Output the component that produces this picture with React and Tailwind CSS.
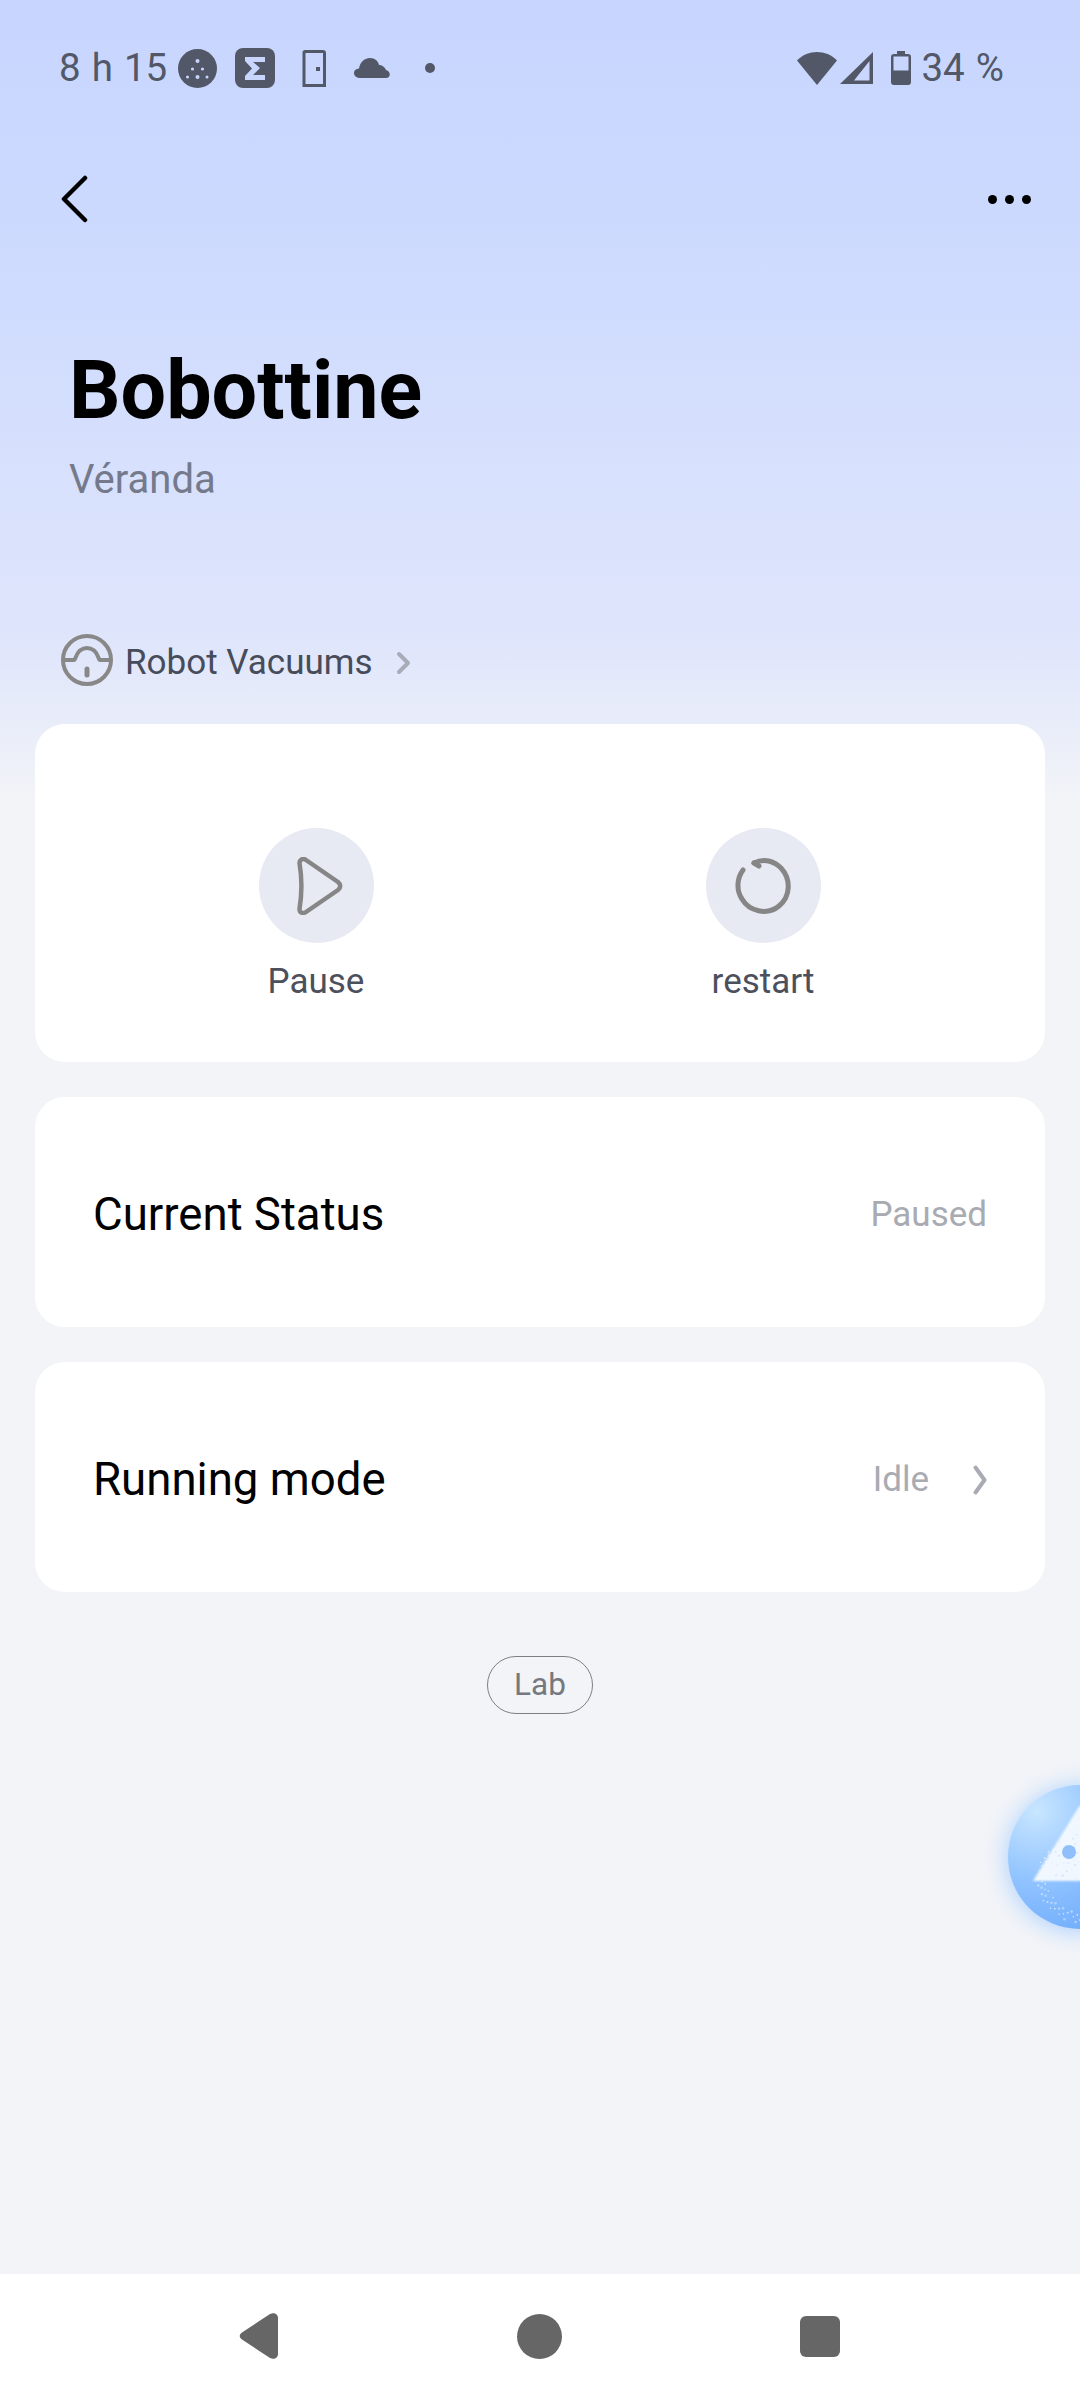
const specks = Array.from({ length: 130 }, (_, i) => {
  const a = (i * 137.508 * Math.PI) / 180;
  const r = 10 + ((i * 37) % 60);
  return { x: 70 + r * Math.cos(a), y: 84 + r * Math.sin(a), s: 0.5 + ((i * 13) % 10) / 10, o: 0.25 + ((i * 7) % 10) / 16 };
});
const holes = Array.from({ length: 60 }, (_, i) => {
  const a = (i * 97.3 * Math.PI) / 180;
  const r = 4 + ((i * 29) % 30);
  return { x: 72 + r * Math.cos(a), y: 72 + r * Math.sin(a) * 0.8, s: 0.4 + ((i * 11) % 8) / 10 };
});

function Ball() {
  return (
    <div className="absolute left-[1008px] top-[1785px] w-[72px] h-[144px] overflow-visible">
      <svg width="144" height="144" viewBox="0 0 144 144" className="block overflow-visible">
        <defs>
          <radialGradient id="ballFill" cx="20%" cy="18%" r="100%">
            <stop offset="0%" stopColor="#c8e6ff" />
            <stop offset="50%" stopColor="#8fc2ff" />
            <stop offset="100%" stopColor="#6aa9fb" />
          </radialGradient>
          <filter id="ballGlow" x="-40%" y="-40%" width="180%" height="180%">
            <feGaussianBlur stdDeviation="11" />
          </filter>
          <filter id="triSoft"><feGaussianBlur stdDeviation="0.9" /></filter>
        </defs>
        <circle cx="72" cy="74" r="74" fill="#9cc8ff" opacity="0.75" filter="url(#ballGlow)" />
        <circle cx="72" cy="72" r="72" fill="url(#ballFill)" />
        {specks.map((p, i) => (
          <circle key={i} cx={p.x} cy={p.y} r={p.s} fill="#fff" opacity={p.o} />
        ))}
        <path d="M72 20 L25 96 L119 96 Z" fill="#f6faff" opacity="0.95" filter="url(#triSoft)" />
        {holes.map((p, i) => (
          <circle key={i} cx={p.x} cy={p.y} r={p.s} fill="#b5d6fb" opacity="0.5" />
        ))}
        <circle cx="61" cy="67" r="7" fill="#8fc0fb" />
      </svg>
    </div>
  );
}

function StatusBar() {
  return (
    <div className="relative h-[92px] pt-[44px] pl-[59px] pr-[76px] flex items-center justify-between text-[#525868]">
      <div className="flex items-center">
        <span className="text-[38.5px] leading-[48px] [word-spacing:1.5px] w-[119px] whitespace-nowrap">8 h 15</span>
        <svg width="39" height="39" viewBox="0 0 39 39" className="block">
          <circle cx="19.5" cy="19.5" r="19.5" fill="#525868" />
          <g fill="#c8d6ff">
            <circle cx="19.5" cy="12" r="2" /><circle cx="14.5" cy="20" r="1.6" /><circle cx="24.5" cy="20" r="1.6" />
            <circle cx="9.5" cy="28" r="1.5" /><circle cx="19.5" cy="28" r="2" /><circle cx="29" cy="28" r="1.5" />
          </g>
        </svg>
        <svg width="40" height="40" viewBox="0 0 40 40" className="block ml-[18px]">
          <rect width="40" height="40" rx="8" fill="#525868" />
          <path d="M10 9 H30 V14 H18 L25 20 L18 27 H30 V32 H10 V28 L17 20.5 L10 13 Z" fill="#c8d6ff" />
        </svg>
        <svg width="24" height="37" viewBox="0 0 24 37" className="block ml-[27px]">
          <path d="M2 35.5 V2.5 Q2 1.5 3 1.5 H21 Q22.500 1.500 22.500 3 V35.5 Z" fill="none" stroke="#525868" strokeWidth="3" />
          <rect x="14" y="17" width="4" height="4" fill="#525868" />
        </svg>
        <svg width="36" height="20" viewBox="0 0 36 20" className="block ml-[28px]">
          <path d="M7 20 C-2 20 -2 11 5 10.500 C6 4 11 0 16 0 C21 0 24 3 25 7 C28 7 31 9 32 12 C37 13 37 20 32 20 Z" fill="#525868" />
        </svg>
        <div className="w-[10px] h-[10px] rounded-full bg-[#525868] ml-[35px]" />
      </div>
      <div className="flex items-center">
        <svg width="40" height="33" viewBox="0 0 40 33" className="block">
          <path d="M0 8.500 C11 -2.800 29 -2.800 40 8.500 L20 33 Z" fill="#525868" />
        </svg>
        <svg width="33" height="32" viewBox="0 0 33 32" className="block ml-[3px]">
          <path d="M0 32 L33 0 V32 Z M14 28.500 H29.500 V9 Z" fillRule="evenodd" fill="#525868" />
        </svg>
        <svg width="20" height="34" viewBox="0 0 20 34" className="block ml-[18px]">
          <path d="M6 0 H14 V3 H17 Q20 3 20 6 V31 Q20 34 17 34 H3 Q0 34 0 31 V6 Q0 3 3 3 H6 Z" fill="#525868" />
          <rect x="2.500" y="5.500" width="15" height="14" fill="#c8d6ff" />
        </svg>
        <span className="text-[38.5px] leading-[48px] [word-spacing:1.5px] ml-[10px] whitespace-nowrap">34 %</span>
      </div>
    </div>
  );
}

function Row({ label, value, chevron }) {
  return (
    <div className="h-[230px] rounded-[30px] bg-white pl-[58px] pr-[58px] pt-[5px] flex items-center justify-between">
      <span className="text-[45.6px] leading-[56px] text-black">{label}</span>
      <div className="flex items-center">
        <span className="text-[35px] leading-[44px] text-[#a9abb2]">{value}</span>
        {chevron && (
          <svg width="14" height="30" viewBox="0 0 14 30" className="block ml-[44px]" fill="none" stroke="#a9abb2" strokeWidth="4" strokeLinecap="round" strokeLinejoin="round">
            <path d="M2.500 2.500 L11.500 15 L2.500 27.500" />
          </svg>
        )}
      </div>
    </div>
  );
}

export default function App() {
  return (
    <div className="relative w-[1080px] h-[2400px] overflow-hidden flex flex-col bg-[#f2f4f8] [font-family:Roboto,'Noto_Sans',sans-serif]">
      <div className="flex-1 flex flex-col bg-[linear-gradient(180deg,#c8d6ff_0px,#cbd9ff_200px,#dfe5fb_640px,#f2f4f8_800px)]">
        <StatusBar />
        <div className="h-[44px] mt-[85px] pl-[61px] pr-[49px] flex items-center justify-between">
          <svg width="27" height="48" viewBox="0 0 27 48" className="block" fill="none" stroke="#000" strokeWidth="4.500" strokeLinecap="round" strokeLinejoin="round">
            <path d="M24 3 L3 24 L24 45" />
          </svg>
          <div className="flex gap-[8px]">
            <div className="w-[9px] h-[9px] rounded-full bg-black" />
            <div className="w-[9px] h-[9px] rounded-full bg-black" />
            <div className="w-[9px] h-[9px] rounded-full bg-black" />
          </div>
        </div>
        <h1 className="mt-[125px] ml-[69px] text-[80.8px] leading-[90px] font-bold text-black">Bobottine</h1>
        <p className="mt-[20px] ml-[69px] text-[40px] leading-[48px] text-[#747a8b]">Véranda</p>
        <div className="mt-[130px] ml-[61px] h-[52px] flex items-center">
          <svg width="52" height="52" viewBox="0 0 52 52" className="block" fill="none" stroke="#888" strokeWidth="4">
            <circle cx="26" cy="26" r="24" />
            <path d="M3 26 H13 C15 26 15 14 26 14 C37 14 37 26 39 26 H49" />
            <path d="M26 35 V41" strokeWidth="5" strokeLinecap="round" />
          </svg>
          <span className="ml-[12px] mt-[6px] text-[35px] leading-[48px] text-[#474c5a]">Robot Vacuums</span>
          <svg width="16" height="24" viewBox="0 0 16 24" className="block ml-[24px] mt-[5px]" fill="none" stroke="#a9abb8" strokeWidth="4" strokeLinecap="round" strokeLinejoin="round">
            <path d="M3 3 L12 12 L3 21" />
          </svg>
        </div>
        <div className="mt-[38px] px-[35px] flex flex-col gap-[35px]">
          <div className="h-[338px] rounded-[30px] bg-white pt-[104px] flex">
            <div className="w-[562px] flex flex-col items-center">
              <div className="w-[115px] h-[115px] rounded-full bg-[#e7e9f3] flex items-center justify-center">
                <svg width="48" height="58" viewBox="0 0 48 58" className="block ml-[5px]" fill="none" stroke="#868686" strokeWidth="4.500" strokeLinejoin="round">
                  <path d="M5 4 C7 1.500 9 1.500 11 3 L43 25 C46 27.500 46 30.500 43 33 L11 55 C8 57 4.500 56 4.500 52 C7 37 7 21 4.500 6 Z" />
                </svg>
              </div>
              <span className="mt-[16px] text-[35px] leading-[46px] text-[#4c505c]">Pause</span>
            </div>
            <div className="w-[332px] flex flex-col items-center">
              <div className="w-[115px] h-[115px] rounded-full bg-[#e7e9f3] flex items-center justify-center">
                <svg width="58" height="58" viewBox="0 0 58 58" className="block" fill="none" stroke="#868686" strokeWidth="5" strokeLinecap="round">
                  <path d="M9 13 C3 21 2 33 8 42 C15 54 33 59 45 49 C57 39 57 22 47 11 C40 4 30 1 20 6" />
                  <path d="M20 6 L25 9" />
                </svg>
              </div>
              <span className="mt-[16px] text-[35px] leading-[46px] text-[#4c505c]">restart</span>
            </div>
          </div>
          <Row label="Current Status" value="Paused" />
          <Row label="Running mode" value="Idle" chevron />
        </div>
        <div className="mt-[64px] self-center w-[106px] h-[58px] rounded-full border border-[#7d7f86] flex items-center justify-center text-[31.5px] leading-[40px] text-[#75787f]">Lab</div>
      </div>
      <div className="h-[126px] bg-white flex items-center">
        <div className="w-full h-[46px] -mt-[2px] flex items-center">
          <svg width="40" height="46" viewBox="0 0 40 46" className="block ml-[239px]">
            <path d="M3 19.500 L31 1 C35 -1 39 1 39 5 V41 C39 45 35 47 31 45 L3 26.500 C0 24.500 0 21.500 3 19.500 Z" fill="#666" />
          </svg>
          <div className="w-[45px] h-[45px] rounded-full bg-[#666] ml-[238px]" />
          <div className="w-[40px] h-[41px] rounded-[6px] bg-[#666] ml-[238px]" />
        </div>
      </div>
      <Ball />
    </div>
  );
}
